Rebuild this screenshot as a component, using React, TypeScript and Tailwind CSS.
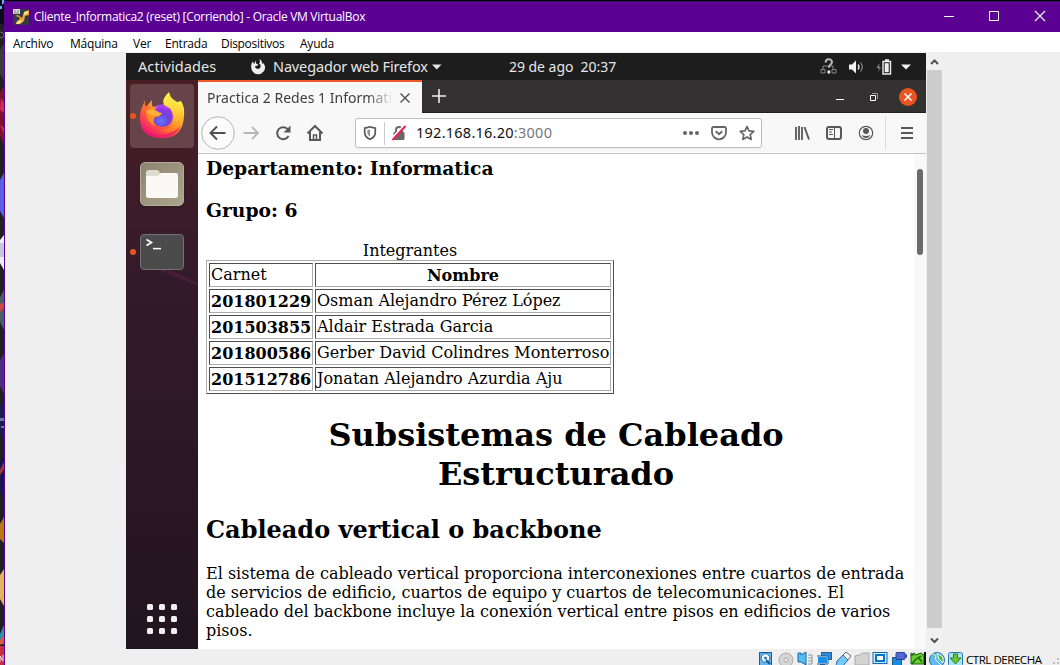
import type { ReactNode } from "react";

type IconProps = { w?: number; h?: number; className?: string; children: ReactNode };

function Icon({ w = 16, h = 16, className = "", children }: IconProps) {
  return (
    <svg width={w} height={h} viewBox={`0 0 ${w} ${h}`} fill="none" className={`shrink-0 ${className}`}>
      {children}
    </svg>
  );
}

function DesktopEdge() {
  return (
    <svg width="4" height="665" viewBox="0 0 4 665" className="shrink-0">
      <rect width="4" height="665" fill="#1f2124" />
      <rect width="4" height="24" fill="#0b0b18" />
      <path d="M2 0h2v3l-2 2zM0 6h2v3H0z" fill="#58b8f0" />
      <path d="M0 32q4 0 4 3t-4 3" fill="none" stroke="#6c6c70" />
      <path d="M0 50l4-7v38l-4-7z" fill="#3b3c3f" />
      <path d="M0 92l4-6v60l-4-10z" fill="#7c1230" />
      <path d="M1 98l3 5v10l-4-3zM0 125l4 3v6z" fill="#d52a50" />
      <path d="M0 180l4-7v45l-4-7z" fill="#5560e6" />
      <path d="M0 240l4-5v35l-4-7z" fill="#eeeef6" />
      <path d="M0 243h4v14H0z" fill="#c3c6dc" />
      <path d="M0 297l4-7v40l-4-8z" fill="#465f66" />
      <path d="M0 304l4-2v6l-4 4z" fill="#c74a40" />
      <path d="M0 360l4-6v40l-4-8z" fill="#4c2d80" />
      <path d="M0 405l4-5v42l-4-8z" fill="#1b1d4c" />
      <path d="M0 418h4v3H0zM1 426h3v2H1z" fill="#6d7aa8" />
      <path d="M0 462l4-6v42l-4-6z" fill="#171650" />
      <path d="M0 470l4-8v7l-4 6z" fill="#a53a35" />
      <path d="M0 524l4-7v26l-4-4z" fill="#b87817" />
      <path d="M0 575l4-6v37l-4-7z" fill="#e1b45e" />
      <path d="M0 634l4-9v19H0z" fill="#2f8fa6" />
      <path d="M0 640l4-5v8l-4 2z" fill="#d65945" />
      <path d="M0 646h4v19H0z" fill="#c92f42" />
      <path d="M0 662v-6l3 5v-6" fill="none" stroke="#f1e3e7" />
    </svg>
  );
}

function TitleBar() {
  return (
    <div className="flex h-[30px] shrink-0 items-center bg-[#5c0094] font-['Open_Sans','Noto_Sans',sans-serif] text-white">
      <Icon className="ml-2">
        <rect width="16" height="16" fill="#343942" />
        <path d="M2 7l3-1 4 3 2-6 5-2v5l-4 1-1 5-4 3H3l1-3 3-2-1-2z" fill="#f2a63c" />
        <path d="M11 3l4-1v2l-4 2zM4 13l3-2 2 2-3 2H3z" fill="#ffe08b" />
        <rect width="7" height="5" fill="#d9d9d9" />
        <path d="M1 2h2M4 2h2M1 4h5" stroke="#888" />
      </Icon>
      <span className="ml-[5px] text-[12px] leading-[16px] tracking-[-0.29px] whitespace-pre">
        Cliente_Informatica2 (reset) [Corriendo] - Oracle VM VirtualBox
      </span>
      <div className="ml-auto flex h-full items-center">
        <Icon w={46} h={30}><path d="M19 14.5h10" stroke="#fff" /></Icon>
        <Icon w={46} h={30}><path d="M18.5 9.5h9v9h-9z" stroke="#fff" /></Icon>
        <Icon w={43} h={30}><path d="M18 9l10 10M28 9l-10 10" stroke="#fff" strokeWidth="1.1" /></Icon>
      </div>
    </div>
  );
}

function MenuBar() {
  return (
    <div className="flex h-5 shrink-0 items-center bg-white pt-[3px] pl-2 font-['Open_Sans','Noto_Sans',sans-serif] text-[12px] tracking-[-0.22px] text-black">
      <span className="w-[57px]">Archivo</span>
      <span className="w-[63px]">Máquina</span>
      <span className="w-[32px]">Ver</span>
      <span className="w-[56px]">Entrada</span>
      <span className="w-[79px] tracking-[-0.3px]">Dispositivos</span>
      <span>Ayuda</span>
    </div>
  );
}

function GnomeBar() {
  return (
    <div className="flex h-[27px] shrink-0 items-center bg-[#1d1d1d] text-[#e6e6e6]">
      <span className="ml-3 w-[112px] text-[14.5px] tracking-[0.08px]">Actividades</span>
      <Icon>
        <path d="M5.6 1.5L4.600 4.200A5.500 5.500 0 1 0 14 5l-.8-1-.4 1.300L11 1 9.300.3l.8 2.300-1 1.800 1.600 1.500-.4 3-2.500 1.200-2.400-1.200L5 7l2.500-.2.8-1.400-2-.7z" fill="#eee" />
        <path d="M1.200 8Q.8 4.500 3 2.500L4 5l2-.5-1 3 1 3.500 3 1 3-1.500 1-3 1.800-1A7 7 0 0 1 8 15.300 7 7 0 0 1 1.200 8z" fill="#eee" />
      </Icon>
      <span className="ml-[7px] w-[159px] text-[14.5px] tracking-[-0.14px] whitespace-nowrap">Navegador web Firefox</span>
      <Icon w={10} h={6}><path d="M0 .5h9.5L4.800 5.500z" fill="#e6e6e6" /></Icon>
      <span className="ml-[67px] text-[14px] tracking-[-0.04px] whitespace-pre">29 de ago  20:37</span>
      <div className="ml-auto flex items-center pr-[15px]">
        <Icon w={17} h={17}>
          <path d="M3 11V8h10v3M1 11.500h4v3.500H1zM12 11.500h4v3.500h-4z" stroke="#888" />
          <path d="M5.500 4.500Q6 1 9 1.300q3.500.4 2.800 3.400c-.3 1.800-3 2-3 5" stroke="#b9b9b9" strokeWidth="2" />
          <path d="M7.500 12.500h2.700v3H7.500z" fill="#eee" />
        </Icon>
        <Icon w={16} h={16} className="ml-[11px]">
          <path d="M1 5.500h3l4-4v13l-4-4H1z" fill="#f4f4f4" />
          <path d="M10 5.500q2 2.500 0 5" stroke="#ddd" strokeWidth="1.4" />
          <path d="M12.500 3.500q3.500 4.500 0 9" stroke="#888" strokeWidth="1.2" />
        </Icon>
        <Icon w={16} h={16} className="ml-[12px]">
          <path d="M3.500 4L.5 9H3l-1 4 3-5H3z" fill="#888" />
          <path d="M9 1h4M7 2.500h7.500v12.500H7z" stroke="#eee" strokeWidth="1.400" />
          <rect x="8.700" y="4.200" width="4" height="9" fill="#eee" />
        </Icon>
        <Icon w={10} h={6} className="ml-[9px]"><path d="M0 .5h10L5 5.500z" fill="#f4f4f4" /></Icon>
      </div>
    </div>
  );
}

function FirefoxLogo() {
  return (
    <svg width="46" height="48" viewBox="0 0 46 48">
      <defs>
        <linearGradient id="fire" x1="38" y1="6" x2="8" y2="44" gradientUnits="userSpaceOnUse">
          <stop offset="0" stopColor="#fff44f" />
          <stop offset=".3" stopColor="#ffc232" />
          <stop offset=".6" stopColor="#ff6b2d" />
          <stop offset="1" stopColor="#f31278" />
        </linearGradient>
        <linearGradient id="flame" x1="29" y1="0" x2="38" y2="40" gradientUnits="userSpaceOnUse">
          <stop offset="0" stopColor="#fff44f" />
          <stop offset=".5" stopColor="#ffd43a" />
          <stop offset="1" stopColor="#ff8a20" stopOpacity=".3" />
        </linearGradient>
        <radialGradient id="globe" cx="22" cy="30" r="13" gradientUnits="userSpaceOnUse">
          <stop offset="0" stopColor="#5f78ff" />
          <stop offset=".6" stopColor="#7040dc" />
          <stop offset="1" stopColor="#9b35e8" />
        </radialGradient>
      </defs>
      <path d="M6 9q-1 4 1 7l6-7q-1 4 1 7l6-2 9 1q-3-7 0-12 4 5 9 8l4-1q4 6 3 15-1 22-22 22Q1 47 1 27 1 19 4 14z" fill="url(#fire)" />
      <circle cx="23.500" cy="25.500" r="10.500" fill="url(#globe)" />
      <path d="M15 16q6-4 13-2l5 5-11-2z" fill="#a843ec" />
      <path d="M30 1q-8 7-5 13l7 4q6 7 2 15-4 7-13 6 9 5 17-1 8-6 6-18l-3-6-1 3q-7-5-10-16z" fill="url(#flame)" />
      <path d="M7 21q5-4 10-1 1 2 6 2-2 4-7 4-3 5 1 10Q7 31 7 21z" fill="#ff8e24" />
      <path d="M7 20q6-4 11 0 2 2 5 2-3 4-7 3-6 0-9-5z" fill="#ffad36" />
      <path d="M3 33q6 12 20 11 11-1 19-9-6 12-19 12Q9 47 3 33z" fill="#eb1470" opacity=".7" />
    </svg>
  );
}

function Dock() {
  return (
    <div className="relative flex w-[72px] shrink-0 flex-col items-center bg-linear-to-b from-[#4a1f24] via-[#331a2b] via-35% to-[#22151f] pt-1">
      <svg width="72" height="569" viewBox="0 0 72 569" className="absolute inset-0">
        <path d="M28 188L72 206v-3L40 188z" fill="#54213d" opacity=".6" />
      </svg>
      <div className="relative flex h-16 w-16 items-center justify-center rounded bg-[#664449] pb-[2px]">
        <FirefoxLogo />
      </div>
      <div className="relative mt-[14px] flex h-[44px] w-[44px] items-center justify-center rounded-[5px] border border-[#b3ac96] bg-linear-to-br from-[#8d8470] to-[#aca58d] shadow">
        <Icon w={34} h={30}>
          <path d="M1 4q0-3 3-3h8q2 0 3 3h15q3 0 3 3v19q0 3-3 3H4q-3 0-3-3z" fill="#dfdcd2" />
          <path d="M1 7h12l3-3h14q3 0 3 3v19q0 3-3 3H4q-3 0-3-3z" fill="#faf9f6" />
        </Icon>
      </div>
      <div className="relative mt-[28px] h-[36px] w-[44px] rounded-[4px] border border-[#727272] bg-[#4b4b4b]">
        <Icon w={24} h={18} className="ml-[3px]">
          <path d="M2.500 4.500l5 3-5 3" stroke="#fff" strokeWidth="1.600" />
          <path d="M9 13.600h8" stroke="#fff" strokeWidth="1.500" />
        </Icon>
      </div>
      <span className="absolute top-[33px] left-1 h-[6px] w-[6px] rounded-full bg-[#e95420]" />
      <span className="absolute top-[169px] left-1 h-[6px] w-[6px] rounded-full bg-[#e95420]" />
      <div className="relative mt-auto mb-[15px] grid grid-cols-3 gap-[6px]">
        {[0, 1, 2, 3, 4, 5, 6, 7, 8].map((n) => (
          <span key={n} className="h-[6px] w-[6px] rounded-[1.5px] bg-[#f1f0f1]" />
        ))}
      </div>
    </div>
  );
}

function TabStrip() {
  return (
    <div className="flex h-[33px] shrink-0 bg-[#333132]">
      <div className="flex w-[224px] items-center border-t-2 border-[#f05a28] bg-[#f8f8f8] pl-[9px] text-[14px] text-[#3e3d40]">
        <span className="w-[186px] mask-r-from-86% mask-r-to-100% pb-px tracking-[0.03px] whitespace-nowrap">
          Practica 2 Redes 1 Informati
        </span>
        <Icon className="ml-[4px]"><path d="M3.500 3.500l9 9M12.500 3.500l-9 9" stroke="#4c4c4f" strokeWidth="1.400" /></Icon>
      </div>
      <div className="flex flex-1 items-center border-b border-[#222021]">
        <Icon className="ml-[9px]"><path d="M1 8h14M8 1v14" stroke="#eee" strokeWidth="1.600" /></Icon>
        <div className="ml-auto flex items-center pt-[2px]">
          <Icon w={18} h={18}><path d="M4 11.500h8" stroke="#fff" /></Icon>
          <Icon w={18} h={18} className="ml-[16px]">
            <path d="M4.500 7.500h5v5h-5z" stroke="#fff" />
            <path d="M6 5.500h5.500V11" stroke="#99979a" />
          </Icon>
          <Icon w={18} h={18} className="mr-[9px] ml-[15px]">
            <circle cx="9" cy="9" r="9" fill="#e95420" />
            <path d="M5.500 5.500l7 7M12.500 5.500l-7 7" stroke="#fff" strokeWidth="1.500" />
          </Icon>
        </div>
      </div>
    </div>
  );
}

function Toolbar() {
  return (
    <div className="flex h-[41px] shrink-0 items-center border-b border-[#c5c5c5] bg-[#f8f8f8] pl-[3px] text-[#58585b]">
      <Icon w={34} h={34}>
        <circle cx="17" cy="17" r="16.300" fill="#fcfcfc" stroke="#b4b4b4" />
        <path d="M24.500 17H10M16 10.500L9.500 17l6.500 6.500" stroke="#4f4f52" strokeWidth="1.900" />
      </Icon>
      <Icon w={32} h={32}><path d="M8.500 16h14M17 10l6 6-6 6" stroke="#b7b7b8" strokeWidth="1.900" /></Icon>
      <Icon w={32} h={32}>
        <path d="M21.500 19A6 6 0 1 1 21 12.500" stroke="currentColor" strokeWidth="2" />
        <path d="M23.500 8.500v7h-7z" fill="currentColor" />
      </Icon>
      <Icon w={32} h={32}>
        <path d="M8.500 16.500L16 9l7.500 7.500M11 15v8h10v-8" stroke="currentColor" strokeWidth="2" />
        <path d="M14.500 23v-5h3v5" stroke="currentColor" strokeWidth="1.500" />
      </Icon>
      <div className="ml-[24px] flex h-[30px] w-[407px] items-center rounded-[3px] border border-[#bebebe] bg-white shadow-xs">
        <Icon className="ml-[6px]">
          <path d="M8 1.800q3 1.200 5.300 1.200v4.500q0 4.500-5.300 6.800-5.300-2.300-5.300-6.800V3Q5 3 8 1.800z" stroke="currentColor" strokeWidth="1.700" />
          <path d="M8 4.500q-2.700.5-2.700.5v3q0 2 2.700 3.500z" fill="currentColor" opacity=".65" />
        </Icon>
        <span className="ml-[6px] h-[23px] w-px bg-[#cbcbcb]" />
        <Icon className="ml-[6px]">
          <path d="M5 8V5q0-3 3-3t3 3v3" stroke="#68686b" strokeWidth="2" />
          <rect x="2.500" y="7" width="11" height="8" rx="1" fill="#68686b" />
          <path d="M.5 14L13 .5" stroke="#fff" strokeWidth="2" />
          <path d="M1.500 15L14.500 1" stroke="#f51d50" strokeWidth="1.900" />
        </Icon>
        <span className="ml-[9px] text-[14.5px] tracking-[0.25px] text-[#101012]">
          192.168.16.20<span className="text-[#777]">:3000</span>
        </span>
        <Icon className="ml-auto">
          <circle cx="2" cy="8" r="2" fill="#666" /><circle cx="8" cy="8" r="2" fill="#666" /><circle cx="14" cy="8" r="2" fill="#666" />
        </Icon>
        <Icon className="ml-[12px]">
          <path d="M2.500 2h11Q15 2 15 3.500v3.800a7 7 0 0 1-14 0V3.500Q1 2 2.500 2z" stroke="#666" strokeWidth="1.800" />
          <path d="M4.700 6.200L8 9.300l3.300-3.100" stroke="#666" strokeWidth="1.900" />
        </Icon>
        <Icon className="mr-[6px] ml-[12px]">
          <path d="M8 1.500l2 4.400 4.800.5-3.600 3.200 1 4.800L8 12l-4.200 2.400 1-4.800-3.600-3.200 4.800-.5z" stroke="#666" strokeWidth="1.700" strokeLinejoin="round" />
        </Icon>
      </div>
      <Icon className="ml-[32px]">
        <path d="M2 2v13M5 1v14M8 2v13" stroke="currentColor" strokeWidth="1.800" />
        <path d="M10.500 2L15 14.500" stroke="currentColor" strokeWidth="1.900" />
      </Icon>
      <Icon className="ml-[16px]">
        <rect x="1" y="2" width="14" height="12" rx="2" stroke="currentColor" strokeWidth="2" />
        <path d="M8.500 2v12" stroke="currentColor" />
        <path d="M3 4.500h4M3 7h3M3 9.500h4" stroke="currentColor" />
      </Icon>
      <Icon className="ml-[16px]">
        <circle cx="8" cy="8" r="6.700" stroke="currentColor" strokeWidth="1.200" />
        <circle cx="8" cy="6" r="3" fill="currentColor" />
        <path d="M3.800 10q4.200 2 8.400 0-1 3-4.200 3t-4.200-3z" fill="currentColor" />
      </Icon>
      <span className="ml-[11px] h-[34px] w-px bg-[#dcdcdc]" />
      <Icon className="ml-[13px]"><path d="M2 3h12M2 8h12M2 13h12" stroke="currentColor" strokeWidth="2" /></Icon>
    </div>
  );
}

const members = [
  ["201801229", "Osman Alejandro Pérez López"],
  ["201503855", "Aldair Estrada Garcia"],
  ["201800586", "Gerber David Colindres Monterroso"],
  ["201512786", "Jonatan Alejandro Azurdia Aju"],
];

const cell = "h-6 border border-t-[#4c4c4c] border-r-[#acacac] border-b-[#acacac] border-l-[#4c4c4c] px-px leading-[19px]";

function WebPage() {
  return (
    <div className="flex min-h-0 flex-1 bg-white">
      <div className="min-w-0 flex-1 overflow-hidden pr-2 pl-2 font-['DejaVu_Serif',serif] text-[16px] leading-[19px] text-black">
        <h3 className="mt-[3px] text-[18.72px] leading-[22px] font-bold">Departamento: Informatica</h3>
        <h3 className="mt-[20px] text-[18.72px] leading-[22px] font-bold">Grupo: 6</h3>
        <table className="mt-[20px] w-[408px] table-fixed border-separate border-spacing-[2px] border border-t-[#acacac] border-r-[#4c4c4c] border-b-[#4c4c4c] border-l-[#acacac]">
          <caption className="h-[19px] leading-[19px]">Integrantes</caption>
          <colgroup><col className="w-[104px]" /><col className="w-[296px]" /></colgroup>
          <tbody>
            <tr>
              <td className={`${cell} pt-px pb-[2px] align-top`}>Carnet</td>
              <th className={`${cell} pt-[2px] pb-px align-top`}>Nombre</th>
            </tr>
            {members.map(([id, name]) => (
              <tr key={id}>
                <th className={`${cell} pt-[2px] pb-px text-left align-top`}>{id}</th>
                <td className={`${cell} pt-px pb-[2px] align-top whitespace-nowrap`}>{name}</td>
              </tr>
            ))}
          </tbody>
        </table>
        <h1 className="mt-[22px] text-center text-[32px] leading-[38.500px] font-bold">
          Subsistemas de Cableado<br />Estructurado
        </h1>
        <h2 className="mt-[23px] text-[24px] leading-[28px] font-bold">Cableado vertical o backbone</h2>
        <p className="mt-[20px]">
          El sistema de cableado vertical proporciona interconexiones entre cuartos de entrada<br />
          de servicios de edificio, cuartos de equipo y cuartos de telecomunicaciones. El<br />
          cableado del backbone incluye la conexión vertical entre pisos en edificios de varios<br />
          pisos.
        </p>
      </div>
      <div className="w-3 shrink-0 bg-[#f9f9f9] pt-[15px] pl-[3px]">
        <div className="h-[86px] w-[6px] rounded-full bg-[#6b6b6b]" />
      </div>
    </div>
  );
}

function HostScrollbar() {
  return (
    <div className="ml-px flex h-[596px] w-[15px] flex-col items-center bg-[#f0f0f0]">
      <Icon w={15} h={17}><path d="M4 11l3.500-3.500L11 11" stroke="#505050" strokeWidth="2" /></Icon>
      <div className="w-full flex-1 bg-[#cdcdcd]" />
      <Icon w={15} h={21}><path d="M4 10.500l3.500 3.500 3.500-3.500" stroke="#505050" strokeWidth="2" /></Icon>
    </div>
  );
}

function StatusBar() {
  return (
    <div className="flex h-4 items-start overflow-hidden pt-[3px] pl-[753px]">
      <Icon h={13}><rect x="1.500" y=".5" width="12" height="14" fill="#63b4f3" stroke="#155da6" /><circle cx="7.500" cy="6" r="4.300" fill="#fff" stroke="#276bac" /><circle cx="7.500" cy="6" r="1.500" fill="#2674bd" /><path d="M8 8l4 4" stroke="#175391" strokeWidth="2" /></Icon>
      <Icon h={13} className="ml-1"><circle cx="8" cy="8" r="7" fill="#d5d5d5" stroke="#aaa" /><circle cx="8" cy="8" r="2" fill="#f1f1f1" stroke="#aaa" /></Icon>
      <Icon h={13} className="ml-[3px]"><path d="M1 1h3v2l5-3v13l-5-3H1z" fill="#56bdf2" stroke="#1767aa" /><path d="M11 3h4v9h-4M11 6h4M11 9h4" stroke="#8d969b" /></Icon>
      <Icon h={13} className="ml-[3px]"><rect x="5.500" y=".5" width="10" height="7" fill="#2e8be0" stroke="#245e93" /><rect x="1.500" y="4.500" width="10" height="7" fill="#1890e8" stroke="#dff4ff" /><path d="M1 4h11v8H1M4 12.500h5" stroke="#245e93" /></Icon>
      <Icon h={13} className="ml-[3px]"><path d="M2 9l6-6 5 5-6 7H3q-3-2-1-6z" fill="#74c8fb" stroke="#276fae" /><path d="M8 3l3-3 5 4-3 4z" fill="#f8f8f8" stroke="#667" /></Icon>
      <Icon h={13} className="ml-[3px]"><path d="M1 4l5-1 2-2h7v12H1z" fill="#d3d3d3" stroke="#aaa" /></Icon>
      <Icon h={13} className="ml-[2px]"><rect x="1" y=".5" width="14" height="11" fill="#c9efff" stroke="#1566ae" /><rect x="4" y="3" width="8" height="6" fill="#fff" stroke="#0875c9" strokeWidth="2" /></Icon>
      <Icon h={13} className="ml-[3px]"><rect x="1.500" y="5.500" width="9" height="8" fill="#188ce3" stroke="#20598f" /><rect x="5" y=".5" width="9" height="7" rx="1" fill="#5269d4" stroke="#2c3d97" /><path d="M14 3l2-1v4l-2-1" fill="#344ca5" /></Icon>
      <Icon h={13} className="ml-[3px]"><path d="M1 1l4 2 6-2 3 2v9H1z" fill="#62cf2b" stroke="#245f13" /><path d="M1 4l4-3M5 8l6-4M8 5l4 5M2 12l3-4" stroke="#236316" strokeWidth="1.500" /><path d="M15 0v13" stroke="#111" strokeWidth="2" /></Icon>
      <Icon h={13} className="ml-[3px]"><circle cx="8" cy="8" r="7.500" fill="#61baf1" stroke="#246ea7" /><path d="M3 2q3 0 4 3-2 2 1 4l4 4M8 1l6 4v6l-4-4z" fill="#55b832" stroke="#eaf9ff" /></Icon>
      <Icon h={13} className="ml-[3px]"><rect x=".5" y=".5" width="14" height="14" rx="2" fill="#a6e4fa" stroke="#2878ae" /><path d="M5.500 2h4v4H13l-5.500 6L2 6h3.500z" fill="#66c739" stroke="#357f1d" /></Icon>
      <span className="ml-[2px] pt-px font-['Open_Sans','Noto_Sans',sans-serif] text-[11.5px] leading-[13px] tracking-[-0.45px] whitespace-nowrap text-black">CTRL DERECHA</span>
      <Icon w={8} h={8} className="mt-[5px] ml-auto"><path d="M1 5h2v2H1zM5 1h2v2H5zM5 5h2v2H5z" fill="#c0c0c0" /></Icon>
    </div>
  );
}

export default function App() {
  return (
    <div className="flex h-[665px] w-[1060px] overflow-hidden bg-[#efefef]">
      <DesktopEdge />
      <div className="flex min-w-0 flex-1 flex-col border-l border-[#5c0094]">
        <div className="h-px shrink-0 bg-black" />
        <div className="h-px shrink-0 bg-[#3d1463]" />
        <TitleBar />
        <MenuBar />
        <div className="flex pt-px pl-[121px]">
          <div className="flex h-[596px] w-[800px] flex-col overflow-hidden font-['Noto_Sans',sans-serif]">
            <GnomeBar />
            <div className="flex min-h-0 flex-1">
              <Dock />
              <div className="flex min-w-0 flex-1 flex-col">
                <TabStrip />
                <Toolbar />
                <WebPage />
              </div>
            </div>
          </div>
          <HostScrollbar />
        </div>
        <StatusBar />
      </div>
    </div>
  );
}
